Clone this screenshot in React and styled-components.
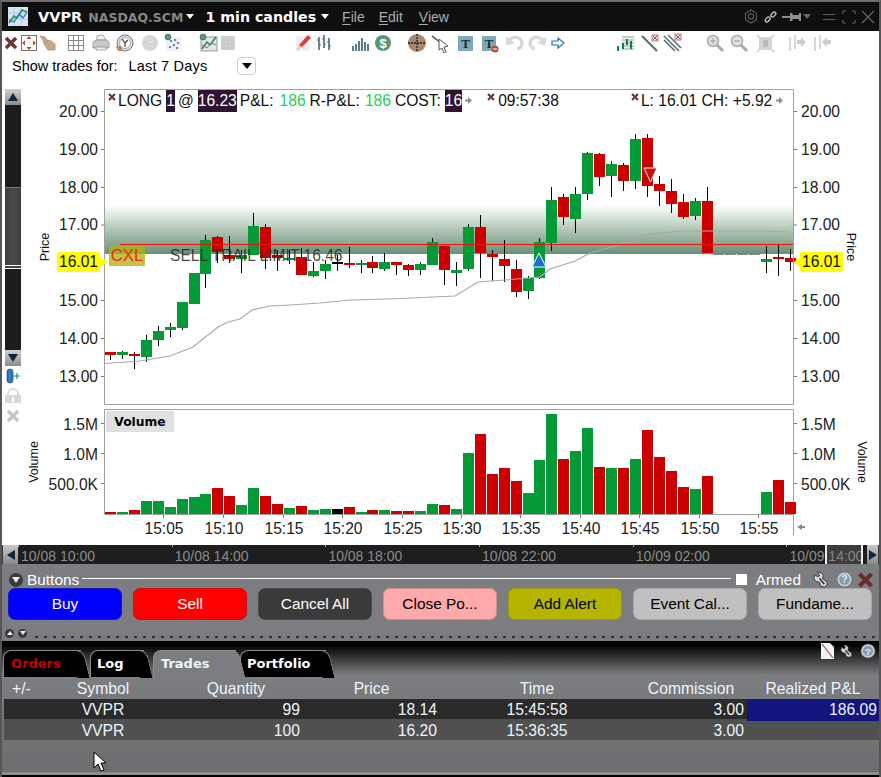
import React from 'react'
import styled, { createGlobalStyle } from 'styled-components'

const Global = createGlobalStyle`
  html, body { margin: 0; padding: 0; background: #000; }
  body { font-family: "Liberation Sans", Arial, sans-serif; }
  * { box-sizing: border-box; }
`

const SANS = '"Liberation Sans", Arial, sans-serif'
const WIDE = '"DejaVu Sans", Verdana, sans-serif'

// color, wick top, body top, body bottom, wick bottom (page y)
const candles = [
  ['r', 352, 352, 355, 360], ['g', 351, 352, 355, 359], ['r', 352, 354, 356, 369], ['g', 335, 340, 357, 362],
  ['g', 326, 331, 340, 346], ['g', 323, 327, 330, 337], ['g', 302, 302, 328, 330], ['g', 273, 273, 304, 304],
  ['g', 235, 240, 274, 288], ['r', 236, 237, 252, 263], ['r', 236, 255, 259, 263], ['g', 250, 255, 259, 273],
  ['g', 213, 226, 255, 255], ['r', 224, 227, 258, 269], ['r', 250, 255, 258, 271], ['g', 250, 258, 260, 264],
  ['r', 248, 257, 275, 275], ['g', 262, 271, 276, 277], ['g', 260, 264, 271, 279], ['k', 255, 262, 264, 271],
  ['r', 247, 263, 265, 268], ['g', 260, 263, 265, 273], ['r', 256, 262, 268, 273], ['g', 253, 262, 269, 271],
  ['r', 262, 262, 265, 275], ['r', 264, 265, 270, 276], ['g', 262, 264, 270, 275], ['g', 238, 242, 265, 265],
  ['r', 246, 246, 270, 285], ['g', 262, 270, 273, 286], ['g', 224, 227, 269, 271], ['r', 215, 227, 253, 278],
  ['r', 250, 254, 257, 281], ['r', 240, 259, 266, 282], ['r', 260, 269, 292, 297], ['g', 276, 278, 291, 299],
  ['g', 238, 242, 278, 279], ['g', 187, 200, 243, 251], ['r', 194, 197, 217, 225], ['g', 187, 194, 219, 233],
  ['g', 152, 153, 194, 200], ['r', 153, 154, 177, 186], ['g', 161, 164, 176, 197], ['r', 163, 165, 181, 191],
  ['g', 134, 139, 181, 189], ['r', 134, 138, 186, 197], ['r', 176, 184, 191, 206], ['r', 179, 191, 204, 213],
  ['r', 194, 202, 217, 219], ['g', 198, 201, 216, 220], ['r', 187, 201, 253, 253],
  ['d', 254, 254, 255, 255], ['d', 254, 254, 255, 255], ['d', 254, 254, 255, 255], ['d', 254, 254, 255, 255],
  ['g', 246, 259, 262, 273], ['r', 244, 257, 259, 276], ['r', 249, 258, 262, 271],
]

// color, top of bar in zoomed crop units (3x), baseline 342
const volumes = [
  ['r', 336], ['g', 336], ['r', 330], ['g', 303], ['g', 303], ['g', 321], ['g', 297], ['g', 291], ['g', 282], ['r', 264],
  ['r', 288], ['g', 315], ['g', 264], ['r', 288], ['r', 312], ['g', 324], ['r', 318], ['g', 330], ['g', 327], ['k', 327],
  ['r', 321], ['g', 336], ['r', 330], ['g', 330], ['r', 333], ['r', 333], ['g', 333], ['g', 312], ['r', 315], ['g', 327],
  ['g', 159], ['r', 102], ['r', 222], ['r', 204], ['r', 243], ['g', 279], ['g', 180], ['g', 42], ['r', 177], ['g', 153],
  ['g', 84], ['r', 201], ['g', 204], ['r', 204], ['g', 177], ['r', 90], ['r', 171], ['r', 213], ['r', 261], ['g', 267],
  ['r', 228], null, null, null, null, ['g', 276], ['r', 240], ['r', 306],
]

const COLORS = { g: '#059a38', r: '#cc0000', k: '#000000', d: '#888888' }
const slotX = (i) => Math.round(105 + 11.93 * i)

const vwap = '105,363.5 140,361 170,356 193,347 218,327 228,322 240,319 252,310 270,306 290,305 320,303 350,300 390,299 455,296 478,282 505,280 540,277 550,269 575,261 590,253 630,242 645,235 680,231 765,231 788,232'

const priceTicks = [[20, 111], [19, 149], [18, 187], [17, 224.5], [15, 300], [14, 338], [13, 376]]
const volTicks = [['1.5M', 423], ['1.0M', 453], ['500.0K', 483]]
const timeTicks = [['15:05', 163], ['15:10', 223], ['15:15', 283], ['15:20', 342], ['15:25', 402], ['15:30', 461], ['15:35', 520], ['15:40', 580], ['15:45', 639], ['15:50', 699], ['15:55', 758]]

const Window = styled.div`
  position: relative;
  width: 881px;
  height: 777px;
  display: flex;
  flex-direction: column;
  border-top: 2px solid #6e6e6e;
  border-left: 2px solid #555;
  border-right: 2px solid #555;
  background: #fff;
  overflow: hidden;
`
const TitleBar = styled.div`
  height: 29px;
  flex: none;
  margin: 0 -2px;
  padding-left: 8px;
  background: #0f0f0f;
  display: flex;
  align-items: center;
`
const Logo = styled.svg`
  width: 20px;
  height: 19px;
  margin-right: 10px;
`
const Ticker = styled.span`
  font: bold 14.5px ${WIDE};
  color: #fff;
`
const Exchange = styled.span`
  font: bold 12.5px ${WIDE};
  color: #85878a;
  margin-left: 6px;
  padding-top: 2px;
`
const Period = styled.span`
  font: bold 14.2px ${WIDE};
  color: #fff;
  margin-left: 11px;
`
const Caret = styled.span`
  width: 0;
  height: 0;
  border-left: 4px solid transparent;
  border-right: 4px solid transparent;
  border-top: 5px solid ${(p) => p.$color || '#fff'};
  margin-left: ${(p) => p.$ml || 3}px;
`
const Menu = styled.span`
  font: 14px ${SANS};
  color: #a5adb5;
  margin-left: ${(p) => p.$ml}px;
  u { text-underline-offset: 2px; }
`
const WinIcons = styled.div`
  margin-left: auto;
  display: flex;
  align-items: center;
  padding-right: 6px;
`
const WinIcon = styled.svg`
  flex: none;
  margin-left: ${(p) => p.$ml}px;
`
const Toolbar = styled.div`
  height: 23px;
  flex: none;
  display: flex;
  align-items: center;
`
const Tool = styled.svg`
  width: 20px;
  height: 20px;
  flex: none;
  margin-left: ${(p) => p.$gap}px;
`
const FilterRow = styled.div`
  height: 33px;
  flex: none;
  display: flex;
  align-items: center;
  padding: 0 0 9px 10px;
  font: 14.5px ${SANS};
  color: #000;
`
const FilterValue = styled.span`
  margin-left: 11px;
  letter-spacing: 0.2px;
`
const DropButton = styled.span`
  width: 19px;
  height: 18px;
  margin-left: 30px;
  border: 1px solid #ccc;
  border-radius: 4px;
  display: flex;
  align-items: center;
  justify-content: center;
  &::before {
    content: "";
    border-left: 5px solid transparent;
    border-right: 5px solid transparent;
    border-top: 6px solid #000;
  }
`
const ChartArea = styled.div`
  height: 458px;
  flex: none;
  display: flex;
  padding-left: 3px;
`
const Rail = styled.div`
  width: 16px;
  flex: none;
  padding-top: 2px;
  display: flex;
  flex-direction: column;
  align-items: center;
`
const RailButton = styled.div`
  width: 16px;
  height: 16px;
  background: linear-gradient(#d0d0d0, #8d8d8d);
  display: flex;
  align-items: center;
  justify-content: center;
  &::before {
    content: "";
    border-left: 5px solid transparent;
    border-right: 5px solid transparent;
    ${(p) => (p.$down ? 'border-top: 8px solid #10233f;' : 'border-bottom: 8px solid #10233f;')}
  }
`
const RailTrack = styled.div`
  width: 16px;
  height: 245px;
  padding-top: 82px;
  background: #1c1c1c;
`
const RailThumb = styled.div`
  height: 82px;
  background: linear-gradient(90deg, #3c3c3c, #4a4a4a 50%, #3c3c3c);
  border-top: 1px solid #777;
  border-bottom: 4px double #fff;
`
const RailIcon = styled.svg`
  width: 16px;
  height: 16px;
  margin-top: ${(p) => p.$mt}px;
  flex: none;
`
const Panes = styled.div`
  width: 858px;
  flex: none;
  display: flex;
  flex-direction: column;
`
const Pane = styled.div`
  position: relative;
  height: ${(p) => p.$h}px;
  flex: none;
  svg { display: block; }
`
const Legend = styled.div`
  position: absolute;
  top: 3px;
  left: 84px;
  width: 688px;
  height: 21px;
  display: flex;
  align-items: center;
  font: 15.6px ${SANS};
  color: #111;
  white-space: nowrap;
`
const LegendText = styled.span`
  margin-left: ${(p) => p.$ml || 0}px;
`
const Dismiss = styled.svg`
  width: 8px;
  height: 8px;
  flex: none;
  align-self: flex-start;
  margin: ${(p) => `3px ${p.$mr || 0}px 0 ${p.$ml}px`};
  display: block;
`
const Dark = styled.span`
  background: #2e1430;
  color: #fff;
  padding: 2px 0;
  margin-left: 4px;
  margin-right: 3px;
`
const Gain = styled.span`
  color: #1fcf5a;
  margin: 0 4px 0 ${(p) => p.$ml}px;
`
const More = styled.svg`
  width: 7px;
  height: 7px;
  flex: none;
  margin-left: ${(p) => p.$ml}px;
  display: block;
`
const PriceTag = styled.div`
  position: absolute;
  top: 165px;
  left: ${(p) => p.$left}px;
  width: 43px;
  height: 20px;
  background: #ffff00;
  border-radius: 2px;
  font: 15.6px/20px ${SANS};
  color: #111;
  text-align: center;
  &::after {
    content: "";
    position: absolute;
    top: 5px;
    ${(p) => (p.$flip
      ? 'left: -6px; border-right: 6px solid #ffff00;'
      : 'right: -8px; border-left: 8px solid #ffff00;')}
    border-top: 5px solid transparent;
    border-bottom: 5px solid transparent;
  }
`
const CancelTag = styled.div`
  position: absolute;
  top: 158px;
  left: 88px;
  width: 36px;
  height: 21px;
  background: rgba(178, 178, 20, 0.78);
  font: 16.8px/21px ${SANS};
  color: #ee2a1a;
  text-align: center;
`
const OrderText = styled.div`
  position: absolute;
  top: 158px;
  left: 149px;
  font: 15.6px/21px ${SANS};
  color: rgba(30, 30, 30, 0.82);
  white-space: nowrap;
`
const VolumeTag = styled.div`
  position: absolute;
  top: 4px;
  left: 85px;
  width: 68px;
  height: 21px;
  background: #e0e0e0;
  font: bold 12.3px/22px ${WIDE};
  color: #000;
  text-align: center;
`
const Navigator = styled.div`
  position: relative;
  height: 19px;
  flex: none;
  margin: 0 -2px;
  background: #3a3a3a;
  padding-left: 3px;
  display: flex;
`
const NavButton = styled.div`
  width: ${(p) => p.$w}px;
  flex: none;
  background: linear-gradient(#c8c8c8, #8a8a8a);
  display: flex;
  align-items: center;
  justify-content: center;
  &::before {
    content: "";
    border-top: 5px solid transparent;
    border-bottom: 5px solid transparent;
    ${(p) => (p.$right ? 'border-left: 8px solid #10233f;' : 'border-right: 8px solid #10233f;')}
  }
`
const NavTrack = styled.div`
  position: relative;
  width: 849px;
  flex: none;
  background: #1e1e1e;
  display: flex;
  overflow: hidden;
`
const NavCell = styled.div`
  position: relative;
  width: 153.7px;
  flex: none;
  padding: 2px 0 0 3px;
  font: 14px/18px ${SANS};
  color: #8c8c8c;
  white-space: nowrap;
  &::before {
    content: "";
    position: absolute;
    left: 0;
    top: 0;
    width: 1px;
    height: 2px;
    background: #aaa;
  }
`
const NavThumb = styled.div`
  position: absolute;
  left: 807px;
  top: 0;
  bottom: 0;
  width: 38px;
  background: rgba(120, 120, 120, 0.35);
  border-left: 2px solid #eee;
  border-right: 2px solid #eee;
`
const ButtonsPanel = styled.div`
  height: 77px;
  flex: none;
  margin: 0 -2px;
  background: #7c7d80;
  padding: 7px 6px 0 8px;
`
const PanelHead = styled.div`
  height: 17px;
  display: flex;
  align-items: center;
  color: #fff;
  font: 15.4px ${SANS};
`
const Toggle = styled.span`
  width: ${(p) => p.$size || 14}px;
  height: ${(p) => p.$size || 14}px;
  margin-left: ${(p) => p.$ml || 0}px;
  border-radius: 50%;
  background: #3a3a3a;
  flex: none;
  display: flex;
  align-items: center;
  justify-content: center;
  &::before {
    content: "";
    border-left: ${(p) => (p.$size ? 3 : 4)}px solid transparent;
    border-right: ${(p) => (p.$size ? 3 : 4)}px solid transparent;
    ${(p) => (p.$up ? 'border-bottom: 4px solid #eee;' : `border-top: ${p.$size ? 4 : 6}px solid #eee;`)}
  }
`
const HeadLabel = styled.span`
  margin-left: 4px;
`
const HeadRule = styled.span`
  flex: 1;
  height: 1px;
  background: #fff;
  margin: 0 5px 2px 3px;
`
const ArmBox = styled.span`
  width: 11px;
  height: 11px;
  background: #fff;
  flex: none;
`
const ArmLabel = styled.span`
  margin: 0 12px 0 9px;
`
const ButtonRow = styled.div`
  display: flex;
  gap: 11px;
`
const Action = styled.div`
  width: 114px;
  height: 32px;
  flex: none;
  border-radius: 7px;
  border: 1px solid ${(p) => p.$line};
  background: ${(p) => p.$bg};
  color: ${(p) => p.$fg};
  font: 15.4px/30px ${SANS};
  text-align: center;
`
const PanelFoot = styled.div`
  display: flex;
  align-items: center;
  gap: 4px;
  margin: 8px 0 0 -3px;
  height: 10px;
`
const Dots = styled.span`
  flex: 1;
  height: 4px;
  margin: 8px 0 0 1px;
  background: radial-gradient(circle, #333 1.2px, transparent 1.6px) 0 0 / 9px 4px repeat-x;
`
const Dock = styled.div`
  position: relative;
  flex: 1;
  margin: 0 -2px;
  padding: 0 2px 2px 3px;
  background: #000;
  display: flex;
  flex-direction: column;
`
const TabStrip = styled.div`
  height: 36px;
  flex: none;
  margin: 0 -2px 0 -3px;
  padding: 9px 0 0 3px;
  background: linear-gradient(#000 10%, #7c7d80 95%);
  display: flex;
  position: relative;
`
const Tab = styled.div`
  position: relative;
  height: 27px;
  width: ${(p) => p.$w}px;
  margin-right: ${(p) => p.$mr}px;
  flex: none;
  z-index: ${(p) => (p.$active ? 2 : 1)};
  background: ${(p) => (p.$active ? '#7c7d80' : '#000')};
  border-top: 1px solid #8a8a8a;
  border-left: 1px solid #8a8a8a;
  border-radius: 8px 0 0 0;
  padding: 5px 0 0 ${(p) => p.$pad}px;
  font: bold 13px/16px ${WIDE};
  color: ${(p) => p.$color};
  &::after {
    content: "";
    position: absolute;
    top: -1px;
    right: -6px;
    width: 12px;
    height: 27px;
    background: inherit;
    border-top: 1px solid #8a8a8a;
    border-right: 1px solid #8a8a8a;
    border-radius: 0 8px 0 0;
    transform: skewX(14deg);
    z-index: -1;
  }
`
const DockIcons = styled.div`
  position: absolute;
  top: 2px;
  right: 5px;
  display: flex;
  align-items: center;
  gap: 6px;
`
const TableArea = styled.div`
  flex: 1;
  background: linear-gradient(#7c7d80, #6c6d6f);
  border-bottom: 3px solid #8d8e90;
  margin: 0 -2px 0 -2px;
  padding: 0 2px 0 3px;
`
const Row = styled.div`
  display: grid;
  grid-template-columns: 32px 134px 132px 137px 196px 112px 132px;
  height: ${(p) => p.$h}px;
  background: ${(p) => p.$bg || 'transparent'};
  font: 15.7px/${(p) => p.$h + 2}px ${SANS};
  color: #eef3fb;
`
const Cell = styled.div`
  text-align: ${(p) => p.$align || 'center'};
  padding: ${(p) => p.$pad || '0'};
  background: ${(p) => p.$bg || 'transparent'};
  white-space: nowrap;
`
const Cursor = styled.svg`
  position: absolute;
  left: 93px;
  top: 110px;
  width: 13px;
  height: 21px;
`

const tools = [
  [11, <path d="M5 5l10 10M15 5L5 15" stroke="#6b3535" strokeWidth="3.4" />],
  [29, <g><rect x="2.5" y="2.5" width="15" height="15" fill="#fff" stroke="#8b6a6a" /><path d="M10 3l2.5 3h-5zM10 17l-2.5-3h5zM3 10l3-2.5v5zM17 10l-3 2.5v-5z" fill="#a85040" /></g>],
  [48, <path d="M2 3l5 1 2 3 4 1 4 3v6H10L6 11 5 7zM8 8l3 4" fill="#c9a98a" stroke="#8d7058" strokeWidth=".6" />],
  [76, <g fill="none" stroke="#888"><rect x="2.5" y="2.5" width="15" height="15" /><path d="M7.5 2.5v15M12.5 2.5v15M2.5 7.5h15M2.5 12.5h15" /></g>],
  [101, <g stroke="#888" strokeWidth=".7"><path d="M6 3l6-1 3 5H6z" fill="#f4f4f4" /><path d="M2 9l3-2h11l2 2v6H2z" fill="#c8c8c8" /><path d="M5 14h10v3H5z" fill="#efefef" /></g>],
  [125, <g><circle cx="10" cy="10" r="8" fill="#ddd" stroke="#777" /><circle cx="10" cy="10" r="5.5" fill="#fff" stroke="#aaa" /><path d="M7 6l3 4 3-3M10 10v4" stroke="#444" strokeWidth="1.2" fill="none" /><path d="M1 13h5l2 5H3z" fill="#b48a70" /></g>],
  [150, <g><circle cx="10" cy="10" r="8" fill="#d6d6d6" /><path d="M7 6l3 4 3-3" stroke="#f2f2f2" fill="none" /></g>],
  [173, <g><rect x="3" y="4" width="15" height="14" fill="#eef" /><circle cx="5" cy="4" r="3" fill="#5f9a68" stroke="#335" strokeWidth=".5" /><g fill="#4a6a60"><circle cx="8" cy="8" r="1" /><circle cx="12" cy="7" r="1" /><circle cx="15" cy="10" r="1" /><circle cx="7" cy="14" r="1" /><circle cx="11" cy="12" r="1" /><circle cx="14" cy="15" r="1" /></g></g>],
  [208, <g><rect x="3" y="4" width="16" height="14" fill="#dfe5e8" stroke="#999" /><circle cx="5" cy="4" r="3" fill="#5f9a68" stroke="#335" strokeWidth=".5" /><path d="M4 16l5-7 3 3 6-8" stroke="#1d8a3d" strokeWidth="1.4" fill="none" /><path d="M4 12l5 3 4-5 5 2" stroke="#778" fill="none" /></g>],
  [228, <g><rect x="3" y="3" width="14" height="14" fill="#d2d2d2" /><path d="M6 3v14M10 3v14M14 3v14M3 7h14M3 11h14M3 15h14" stroke="#bdbdbd" strokeDasharray="1 1" /></g>],
  [303, <g><rect x="3" y="3" width="13" height="15" fill="#f0f0f4" /><path d="M4 17l2-5 9-10 3 3-9 9z" fill="#e33a2b" /><path d="M4 17l2-5 3 2z" fill="#f5dcb0" /></g>],
  [325, <g stroke="#4c6c74" strokeWidth="1.6"><path d="M4 4v13M9 2v13M14 5v12" /><path d="M2 7h2M4 12h2M7 6h2M9 11h2M12 9h2M14 13h2" strokeWidth="1.2" /></g>],
  [360, <g fill="#5a7a90"><rect x="2" y="13" width="2" height="5" /><rect x="5" y="11" width="2" height="7" /><rect x="8" y="8" width="2" height="10" /><rect x="11" y="5" width="2" height="13" /><rect x="14" y="9" width="2" height="9" /><rect x="17" y="11" width="2" height="7" /></g>],
  [383, <g><circle cx="10" cy="10" r="8" fill="#5f9470" /><text x="10" y="14.5" textAnchor="middle" fontSize="13" fontWeight="bold" fontFamily={SANS} fill="#fff">$</text></g>],
  [417, <g><circle cx="10" cy="10" r="9" fill="#a9876b" /><path d="M1 10h18M10 1v18" stroke="#222" strokeDasharray="2 1" strokeWidth="1.3" /></g>],
  [441, <g><path d="M1 3l9 7" stroke="#444" strokeWidth="1.4" /><path d="M8 6l9 7-4 1 2 5-2 1-2-5-3 2z" fill="#fff" stroke="#555" /></g>],
  [466, <g><rect x="2" y="3" width="15" height="15" fill="#7fa8b8" /><text x="9.5" y="15" textAnchor="middle" fontSize="13" fontWeight="bold" fontFamily="Liberation Serif" fill="#1d2d35">T</text></g>],
  [490, <g><rect x="2" y="3" width="14" height="15" fill="#7fa8b8" /><text x="9" y="15" textAnchor="middle" fontSize="13" fontWeight="bold" fontFamily="Liberation Serif" fill="#1d2d35">T</text><circle cx="15" cy="16" r="3.6" fill="#b5523e" /><path d="M13 16h4" stroke="#fff" /></g>],
  [514, <g fill="none" stroke="#d8d8d8"><path d="M5 9a6.500 6 0 1 1 8 7" strokeWidth="3.600" /><path d="M2 4l1 8 7-2z" fill="#d8d8d8" strokeWidth="1" /></g>],
  [538, <g fill="none" stroke="#d8d8d8"><path d="M15 9a6.500 6 0 1 0-8 7" strokeWidth="3.600" /><path d="M18 4l-1 8-7-2z" fill="#d8d8d8" strokeWidth="1" /></g>],
  [558, <path d="M4 8h6V5l6 5-6 5v-3H4z" fill="#fff" stroke="#1a73c9" strokeWidth="1.200" />],
  [626, <g><rect x="5" y="3" width="14" height="14" fill="#eef5f2" /><path d="M6 4h12M6 7h12M6 10h12M6 13h12M6 16h12" stroke="#8ab09a" /><path d="M2 13v5M7 10v6M11 6v6M15 8v8" stroke="#1f7a45" strokeWidth="2" /></g>],
  [650, <g><path d="M2 3l15 15" stroke="#546b72" strokeWidth="2" /><rect x="12" y="2" width="6" height="6" fill="#eee" stroke="#a77" /><path d="M13 3l4 4M17 3l-4 4" stroke="#a44" /></g>],
  [672, <g><path d="M2 3l15 15M2 7l11 11M6 2l13 13" stroke="#546b72" strokeWidth="1.5" /><rect x="13" y="1" width="6" height="6" fill="#eee" stroke="#a77" /><path d="M14 2l4 4M18 2l-4 4" stroke="#a44" /></g>],
  [715, <g><circle cx="8" cy="8" r="5.5" fill="#e2e2e2" stroke="#aaa" strokeWidth="1.5" /><path d="M12 12l6 6" stroke="#aaa" strokeWidth="3" /><path d="M5 8h6M8 5v6" stroke="#999" /></g>],
  [739, <g><circle cx="8" cy="8" r="5.5" fill="#e2e2e2" stroke="#aaa" strokeWidth="1.5" /><path d="M12 12l6 6" stroke="#aaa" strokeWidth="3" /><path d="M5 8h6" stroke="#999" /></g>],
  [765, <g><rect x="4" y="4" width="13" height="13" fill="#d4d4d4" /><path d="M2 2l3 3M19 2l-3 3M2 19l3-3M19 19l-3-3" stroke="#ccc" strokeWidth="1.5" /><rect x="8" y="7" width="5" height="7" fill="#bbb" /></g>],
  [797, <g><path d="M3 4v14M8 2v14" stroke="#ccc" strokeWidth="1.5" /><path d="M10 7h4V4l5 5-5 5v-3h-4z" fill="#ccc" /></g>],
  [822, <g><path d="M3 4v14M8 2v14" stroke="#ccc" strokeWidth="1.5" /><path d="M19 7h-4V4l-5 5 5 5v-3h4z" fill="#ccc" /></g>],
]

const tabs = [
  { name: 'Orders', w: 78, mr: 9, pad: 7, color: '#c00000' },
  { name: 'Log', w: 54, mr: 9, pad: 6, color: '#fff' },
  { name: 'Trades', w: 83, mr: 4, pad: 7, color: '#eef3fb', active: true },
  { name: 'Portfolio', w: 86, mr: 0, pad: 6, color: '#fff' },
]

const actions = [
  { label: 'Buy', bg: '#0000ff', line: '#1a1ac0', fg: '#fff' },
  { label: 'Sell', bg: '#ff0000', line: '#c81010', fg: '#fff' },
  { label: 'Cancel All', bg: '#3a3a3a', line: '#4a4a4a', fg: '#fff' },
  { label: 'Close Po...', bg: '#ffaaaa', line: '#d09090', fg: '#000' },
  { label: 'Add Alert', bg: '#b5b500', line: '#9a9a10', fg: '#000' },
  { label: 'Event Cal...', bg: '#c0c0c0', line: '#a8a8a8', fg: '#000' },
  { label: 'Fundame...', bg: '#c0c0c0', line: '#a8a8a8', fg: '#000' },
]

const AxisText = (props) => <text fontFamily={SANS} fontSize="15.6" fill="#222" {...props} />

function PriceChart() {
  return (
    <svg width="858" height="320" viewBox="21 87 858 320">
      <defs>
        <linearGradient id="band" x1="0" y1="0" x2="0" y2="1">
          <stop offset="0" stopColor="#ffffff" />
          <stop offset="0.45" stopColor="#b9cdbd" />
          <stop offset="1" stopColor="#6a8f74" />
        </linearGradient>
      </defs>
      <rect x="105" y="205" width="688" height="49" fill="url(#band)" />
      {candles.map(([c, wt, bt, bb, wb], i) => {
        const x = slotX(i)
        return (
          <g key={i}>
            <rect x={x + 5} y={wt} width="1" height={wb - wt} fill="#000" />
            <rect x={x} y={bt} width="11" height={bb - bt} fill={COLORS[c]} />
          </g>
        )
      })}
      <polyline points={vwap} fill="none" stroke="#a8a8a8" strokeWidth="1.2" />
      <rect x="120" y="244" width="673" height="1" fill="#ee1515" />
      <path d="M539 253l7 14h-14z" fill="#1a6fd0" stroke="#fff" strokeWidth="1" />
      <path d="M644 168h13l-6.500 14z" fill="#cc1111" stroke="#fff" strokeWidth="1" />
      <path d="M104.500 89.500h689v315h-689z" fill="none" stroke="#a0a0a0" />
      {priceTicks.map(([p, y]) => (
        <g key={p}>
          <rect x="101" y={y} width="3" height="1" fill="#777" />
          <rect x="794" y={y} width="3" height="1" fill="#777" />
          <AxisText x="98" y={y + 5.5} textAnchor="end">{p.toFixed(2)}</AxisText>
          <AxisText x="801" y={y + 5.5}>{p.toFixed(2)}</AxisText>
        </g>
      ))}
      <text x="0" y="0" fontFamily={SANS} fontSize="12.5" fill="#111" textAnchor="middle" transform="translate(49 247) rotate(-90)">Price</text>
      <text x="0" y="0" fontFamily={SANS} fontSize="12.5" fill="#111" textAnchor="middle" transform="translate(847 247) rotate(90)">Price</text>
    </svg>
  )
}

function VolumeChart() {
  return (
    <svg width="858" height="138" viewBox="21 407 858 138">
      <path d="M793.500 409.500h-689v105h689M793.500 409.500v126" fill="none" stroke="#a0a0a0" />
      {volumes.map((v, i) => v && (
        <rect key={i} x={slotX(i)} y={400 + v[1] / 3} width="11" height={(342 - v[1]) / 3} fill={COLORS[v[0]]} />
      ))}
      {volTicks.map(([l, y]) => (
        <g key={l}>
          <rect x="101" y={y} width="3" height="1" fill="#777" />
          <rect x="794" y={y} width="3" height="1" fill="#777" />
          <AxisText x="98" y={y + 7} textAnchor="end">{l}</AxisText>
          <AxisText x="801" y={y + 7}>{l}</AxisText>
        </g>
      ))}
      {timeTicks.map(([l, x]) => (
        <g key={l}>
          <rect x={x} y="515" width="1" height="3" fill="#777" />
          <AxisText x={x + 1} y="534" textAnchor="middle">{l}</AxisText>
        </g>
      ))}
      <path d="M802 524v6l-5-3z M801 526h4v2h-4z" fill="#8a8a8a" />
      <text x="0" y="0" fontFamily={SANS} fontSize="12.5" fill="#111" textAnchor="middle" transform="translate(38 462) rotate(-90)">Volume</text>
      <text x="0" y="0" fontFamily={SANS} fontSize="12.5" fill="#111" textAnchor="middle" transform="translate(858 462) rotate(90)">Volume</text>
    </svg>
  )
}

function Help({ size = 17 }) {
  return (
    <svg width={size} height={size} viewBox="0 0 18 18">
      <circle cx="9" cy="9" r="8" fill="#c4ccd4" stroke="#555" strokeWidth=".6" />
      <circle cx="9" cy="9" r="5.600" fill="#7f9ab4" />
      <text x="9" y="13" textAnchor="middle" fontSize="11" fontWeight="bold" fontFamily={SANS} fill="#dfe8f2">?</text>
    </svg>
  )
}

function Wrench({ size = 17 }) {
  return (
    <svg width={size} height={size} viewBox="0 0 18 18">
      <path d="M5 1l4 1 2 3-1 3 5 4v3l-3 2-4-1-1-4-4-1-2-3 1-4 3 2 2-1z" fill="#d4d8dc" stroke="#2c2c2c" strokeWidth=".9" />
      <path d="M7 8l5 6" stroke="#333" strokeWidth="1.800" />
    </svg>
  )
}

const DismissIcon = (props) => (
  <Dismiss viewBox="0 0 8 8" {...props}>
    <path d="M1 1l6 6M7 1L1 7" stroke="#6a3030" strokeWidth="2" />
  </Dismiss>
)

const MoreIcon = (props) => (
  <More viewBox="0 0 7 7" {...props}>
    <path d="M0 2.500h3V0l4 3.500L3 7V4.500H0z" fill="#8f8f8f" />
  </More>
)

export default function App() {
  return (
    <>
      <Global />
      <Window>
        <TitleBar>
          <Logo viewBox="0 0 20 19">
            <rect width="20" height="19" fill="#d8e4ee" />
            <path d="M0 6h20M0 12h20M6 0v19M13 0v19" stroke="#a8b8c8" strokeWidth=".6" />
            <path d="M1 16l5-7 3 2 5-8 5 2" stroke="#14a050" strokeWidth="1.6" fill="none" />
            <path d="M1 13l5 2 5-8 4 4 4-6" stroke="#2a6fd0" strokeWidth="1.200" fill="none" />
          </Logo>
          <Ticker>VVPR</Ticker>
          <Exchange>NASDAQ.SCM</Exchange>
          <Caret />
          <Period>1 min candles</Period>
          <Caret $ml={5} />
          <Menu $ml={13}><u>F</u>ile</Menu>
          <Menu $ml={14}><u>E</u>dit</Menu>
          <Menu $ml={16}><u>V</u>iew</Menu>
          <WinIcons>
            <WinIcon $ml={0} width="14" height="15" viewBox="0 0 14 15" fill="none" stroke="#5c5c5c" strokeWidth="1.100">
              <path d="M7 1l5.500 3.200v6.600L7 14l-5.500-3.200V4.200z" />
              <circle cx="7" cy="7.500" r="2.600" />
            </WinIcon>
            <WinIcon $ml={6} width="13" height="14" viewBox="0 0 16 16" fill="none" stroke="#d0d0d0" strokeWidth="1.500">
              <rect x="1" y="9" width="7" height="4" rx="2" transform="rotate(-45 4.500 11)" />
              <rect x="8" y="3" width="7" height="4" rx="2" transform="rotate(-45 11.500 5)" />
            </WinIcon>
            <WinIcon $ml={5} width="19" height="10" viewBox="0 0 19 10">
              <path d="M0 4h8v2H0zM8 1h2l1 2h6V1h2v8h-2V7h-6l-1 2H8z" fill="#8e8e8e" />
            </WinIcon>
            <Caret $ml={2} $color="#666" />
            <WinIcon $ml={12} width="12" height="8" viewBox="0 0 12 8">
              <path d="M0 1.500h12M0 6.500h12" stroke="#5c5c5c" strokeWidth="1.200" />
            </WinIcon>
            <WinIcon $ml={7} width="14" height="14" viewBox="0 0 14 14" fill="none" stroke="#5c5c5c" strokeWidth="1.200">
              <path d="M1 4V1h3M10 1h3v3M13 10v3h-3M4 13H1v-3" />
            </WinIcon>
            <WinIcon $ml={5} width="14" height="14" viewBox="0 0 14 14" stroke="#666" strokeWidth="1.200">
              <path d="M1 1l12 12M13 1L1 13" />
            </WinIcon>
          </WinIcons>
        </TitleBar>

        <Toolbar>
          {tools.map(([cx, icon], i) => (
            <Tool key={cx} viewBox="0 0 20 20" $gap={i === 0 ? cx - 12 : cx - tools[i - 1][0] - 20}>
              {icon}
            </Tool>
          ))}
        </Toolbar>

        <FilterRow>
          Show trades for:
          <FilterValue>Last 7 Days</FilterValue>
          <DropButton />
        </FilterRow>

        <ChartArea>
          <Rail>
            <RailButton />
            <RailTrack><RailThumb /></RailTrack>
            <RailButton $down />
            <RailIcon $mt={2} viewBox="0 0 16 16">
              <rect x="2" y="1" width="6" height="14" rx="3" fill="#2a78c8" stroke="#10335a" strokeWidth=".6" />
              <path d="M8 8h7M12 5v6" stroke="#10a050" strokeWidth="1.200" />
            </RailIcon>
            <RailIcon $mt={4} viewBox="0 0 16 16">
              <path d="M3 7V5a5 4 0 0 1 10 0v2" fill="none" stroke="#ddd" strokeWidth="2" />
              <rect x="0" y="7" width="16" height="8" fill="#d8d8d8" />
              <rect x="7" y="9" width="2" height="5" fill="#fff" />
            </RailIcon>
            <RailIcon $mt={4} viewBox="0 0 16 16">
              <path d="M3 3l10 10M13 3L3 13" stroke="#c4c4c4" strokeWidth="3.400" />
            </RailIcon>
          </Rail>
          <Panes>
            <Pane $h={320}>
              <PriceChart />
              <Legend>
                <DismissIcon $ml={3} />
                <LegendText $ml={2}>LONG</LegendText>
                <Dark>1</Dark>@
                <Dark>16.23</Dark>P&amp;L:
                <Gain $ml={6}>186</Gain>R-P&amp;L:
                <Gain $ml={5}>186</Gain>COST:
                <Dark>16</Dark>
                <MoreIcon $ml={0} />
                <DismissIcon $ml={15} $mr={3} />
                09:57:38
                <DismissIcon $ml={72} $mr={2} />
                L: 16.01 CH: +5.92
                <MoreIcon $ml={4} />
              </Legend>
              <PriceTag $left={36}>16.01</PriceTag>
              <CancelTag>CXL</CancelTag>
              <OrderText>SELL TRAIL LIMIT 16.46</OrderText>
              <PriceTag $left={779} $flip>16.01</PriceTag>
            </Pane>
            <Pane $h={138}>
              <VolumeChart />
              <VolumeTag>Volume</VolumeTag>
            </Pane>
          </Panes>
        </ChartArea>

        <Navigator>
          <NavButton $w={15} />
          <NavTrack>
            {['10/08 10:00', '10/08 14:00', '10/08 18:00', '10/08 22:00', '10/09 02:00', '10/09 14:00'].map((t) => (
              <NavCell key={t}>{t}</NavCell>
            ))}
            <NavThumb />
          </NavTrack>
          <NavButton $w={11} $right />
        </Navigator>

        <ButtonsPanel>
          <PanelHead>
            <Toggle $ml={1} />
            <HeadLabel>Buttons</HeadLabel>
            <HeadRule />
            <ArmBox />
            <ArmLabel>Armed</ArmLabel>
            <Wrench />
            <span style={{ width: 6 }} />
            <Help />
            <svg width="19" height="18" viewBox="0 0 18 18" style={{ marginLeft: 3 }}>
              <path d="M3 3l12 12M15 3L3 15" stroke="#6e2a2a" strokeWidth="4" />
            </svg>
          </PanelHead>
          <ButtonRow>
            {actions.map((a) => (
              <Action key={a.label} $bg={a.bg} $line={a.line} $fg={a.fg}>{a.label}</Action>
            ))}
          </ButtonRow>
          <PanelFoot>
            <Toggle $size={9} $up />
            <Toggle $size={9} />
            <Dots />
          </PanelFoot>
        </ButtonsPanel>

        <Dock>
          <TabStrip>
            {tabs.map((t) => (
              <Tab key={t.name} $w={t.w} $mr={t.mr} $pad={t.pad} $color={t.color} $active={t.active}>{t.name}</Tab>
            ))}
            <DockIcons>
              <svg width="13" height="16" viewBox="0 0 13 16">
                <path d="M0 0h9l4 4v12H0z" fill="#f4f4f4" />
                <path d="M1 1l11 14" stroke="#a04848" strokeWidth="1.100" />
              </svg>
              <Wrench size={14} />
              <Help size={16} />
            </DockIcons>
          </TabStrip>
          <TableArea>
            <Row $h={22}>
              <Cell $align="left" $pad="0 0 0 8px">+/-</Cell>
              <Cell>Symbol</Cell>
              <Cell>Quantity</Cell>
              <Cell $pad="0 0 0 2px">Price</Cell>
              <Cell>Time</Cell>
              <Cell>Commission</Cell>
              <Cell>Realized P&amp;L</Cell>
            </Row>
            <Row $h={20} $bg="#2a2a2a">
              <Cell />
              <Cell>VVPR</Cell>
              <Cell $align="right" $pad="0 2px 0 0">99</Cell>
              <Cell $align="right" $pad="0 2px 0 0">18.14</Cell>
              <Cell>15:45:58</Cell>
              <Cell $align="right" $pad="0 3px 0 0">3.00</Cell>
              <Cell $align="right" $pad="0 2px 0 0" $bg="#14147f">186.09</Cell>
            </Row>
            <Row $h={21} $bg="#505050">
              <Cell />
              <Cell>VVPR</Cell>
              <Cell $align="right" $pad="0 2px 0 0">100</Cell>
              <Cell $align="right" $pad="0 2px 0 0">16.20</Cell>
              <Cell>15:36:35</Cell>
              <Cell $align="right" $pad="0 3px 0 0">3.00</Cell>
              <Cell />
            </Row>
          </TableArea>
          <Cursor viewBox="0 0 13 21">
            <path d="M1 1v16l4-4 3 7 3-1-3-7h5z" fill="#fff" stroke="#000" />
          </Cursor>
        </Dock>
      </Window>
    </>
  )
}
